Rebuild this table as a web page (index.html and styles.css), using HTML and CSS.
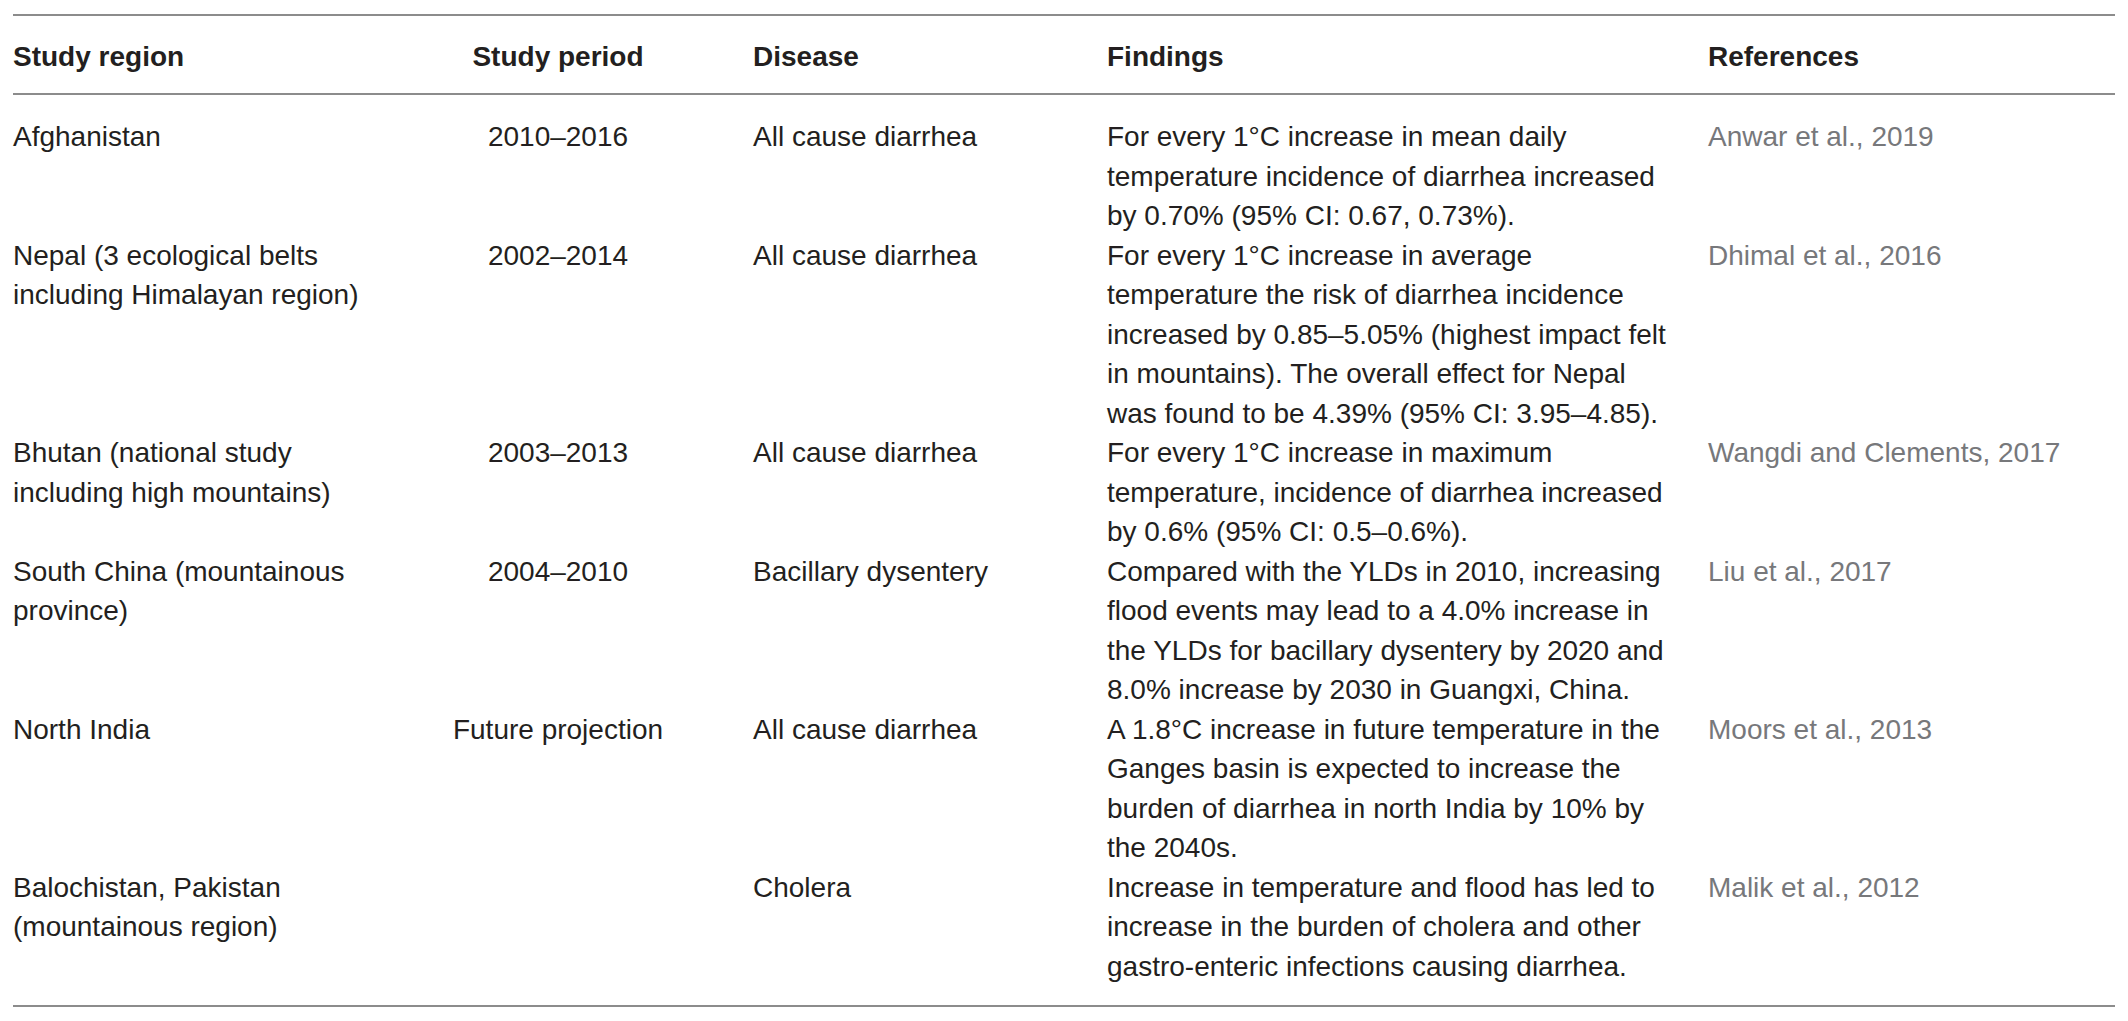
FILE: index.html
```html
<!DOCTYPE html>
<html lang="en">
<head>
<meta charset="utf-8">
<title>Climate and diarrheal disease studies</title>
<link rel="stylesheet" href="styles.css">
</head>
<body>
<table class="studies">
  <colgroup>
    <col class="c-region">
    <col class="c-period">
    <col class="c-disease">
    <col class="c-findings">
    <col class="c-refs">
  </colgroup>
  <thead>
    <tr>
      <th>Study region</th>
      <th class="center">Study period</th>
      <th>Disease</th>
      <th>Findings</th>
      <th>References</th>
    </tr>
  </thead>
  <tbody>
    <tr>
      <td>Afghanistan</td>
      <td class="center">2010–2016</td>
      <td>All cause diarrhea</td>
      <td>For every 1°C increase in mean daily<br>temperature incidence of diarrhea increased<br>by 0.70% (95% CI: 0.67, 0.73%).</td>
      <td class="ref">Anwar et al., 2019</td>
    </tr>
    <tr>
      <td>Nepal (3 ecological belts<br>including Himalayan region)</td>
      <td class="center">2002–2014</td>
      <td>All cause diarrhea</td>
      <td>For every 1°C increase in average<br>temperature the risk of diarrhea incidence<br>increased by 0.85–5.05% (highest impact felt<br>in mountains). The overall effect for Nepal<br>was found to be 4.39% (95% CI: 3.95–4.85).</td>
      <td class="ref">Dhimal et al., 2016</td>
    </tr>
    <tr>
      <td>Bhutan (national study<br>including high mountains)</td>
      <td class="center">2003–2013</td>
      <td>All cause diarrhea</td>
      <td>For every 1°C increase in maximum<br>temperature, incidence of diarrhea increased<br>by 0.6% (95% CI: 0.5–0.6%).</td>
      <td class="ref">Wangdi and Clements, 2017</td>
    </tr>
    <tr>
      <td>South China (mountainous<br>province)</td>
      <td class="center">2004–2010</td>
      <td>Bacillary dysentery</td>
      <td>Compared with the YLDs in 2010, increasing<br>flood events may lead to a 4.0% increase in<br>the YLDs for bacillary dysentery by 2020 and<br>8.0% increase by 2030 in Guangxi, China.</td>
      <td class="ref">Liu et al., 2017</td>
    </tr>
    <tr>
      <td>North India</td>
      <td class="center">Future projection</td>
      <td>All cause diarrhea</td>
      <td>A 1.8°C increase in future temperature in the<br>Ganges basin is expected to increase the<br>burden of diarrhea in north India by 10% by<br>the 2040s.</td>
      <td class="ref">Moors et al., 2013</td>
    </tr>
    <tr>
      <td>Balochistan, Pakistan<br>(mountainous region)</td>
      <td class="center"></td>
      <td>Cholera</td>
      <td>Increase in temperature and flood has led to<br>increase in the burden of cholera and other<br>gastro-enteric infections causing diarrhea.</td>
      <td class="ref">Malik et al., 2012</td>
    </tr>
  </tbody>
</table>
</body>
</html>
```
FILE: styles.css
```css
html, body {
  margin: 0;
  padding: 0;
  background: #ffffff;
}

.studies {
  margin: 14px 0 0 13px;
  width: 2102px;
  table-layout: fixed;
  border-collapse: separate;
  border-spacing: 0;
  font-family: "Liberation Sans", Arial, Helvetica, sans-serif;
  font-size: 28px;
  line-height: 39.5px;
  color: #231f20;
}

.c-region { width: 350px; }
.c-period { width: 390px; }
.c-disease { width: 354px; }
.c-findings { width: 601px; }
.c-refs { width: 407px; }

.studies th {
  font-weight: bold;
  text-align: left;
  padding: 21px 0 16.5px 0;
  border-top: 2px solid #8c8c8c;
  border-bottom: 2px solid #8c8c8c;
  white-space: nowrap;
}

.studies td {
  padding: 0;
  vertical-align: top;
  text-align: left;
  white-space: nowrap;
}

.studies tbody tr:first-child td {
  padding-top: 22px;
}

.studies tbody tr:last-child td {
  padding-bottom: 19px;
  border-bottom: 2px solid #8c8c8c;
}

.studies .center {
  text-align: center;
}

.studies .ref {
  color: #77787b;
}
```
